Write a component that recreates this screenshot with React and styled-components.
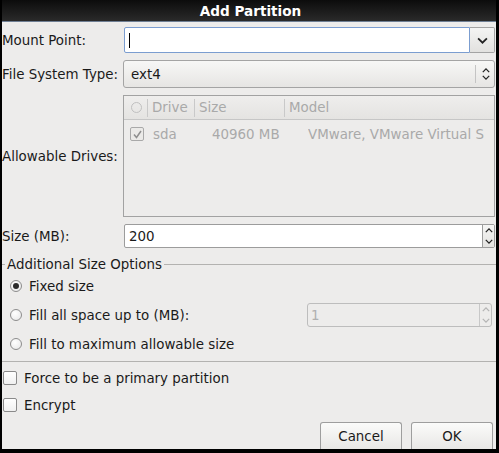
import React from "react";
import styled, { createGlobalStyle } from "styled-components";

const GlobalStyle = createGlobalStyle`
  html, body {
    margin: 0;
    padding: 0;
    background: #000;
  }
  body {
    font-family: "DejaVu Sans", "Liberation Sans", sans-serif;
    font-size: 13.4px;
    color: #1a1a1a;
  }
  * {
    box-sizing: border-box;
  }
`;

const Chevron = ({ dir = "down", size = 9, color = "#222" }) => (
  <svg width={size} height={Math.round(size * 0.6)} viewBox="0 0 10 6">
    <path
      d={dir === "down" ? "M1 1 L5 5 L9 1" : "M1 5 L5 1 L9 5"}
      fill="none"
      stroke={color}
      strokeWidth="1.6"
    />
  </svg>
);

const drives = [
  { drive: "sda", size: "40960 MB", model: "VMware, VMware Virtual S" },
];

function App() {
  return (
    <>
      <GlobalStyle />
      <Window>
        <TitleBar>Add Partition</TitleBar>
        <Body>
          <FormGrid>
            <Label>Mount Point:</Label>
            <ComboEntry>
              <Entry focused>
                <Caret />
              </Entry>
              <DropButton>
                <Chevron dir="down" size={11} />
              </DropButton>
            </ComboEntry>

            <Label>File System Type:</Label>
            <ComboBox>
              <span>ext4</span>
              <ComboArrows>
                <Chevron dir="up" size={8} />
                <Chevron dir="down" size={8} />
              </ComboArrows>
            </ComboBox>

            <Label>Allowable Drives:</Label>
            <DriveTable>
              <HeaderRow>
                <HeadCell width={24}>
                  <RadioMark size={11} dim />
                </HeadCell>
                <HeadCell width={47}>Drive</HeadCell>
                <HeadCell width={90}>Size</HeadCell>
                <HeadCell last>Model</HeadCell>
              </HeaderRow>
              {drives.map((d) => (
                <DriveRow key={d.drive}>
                  <Cell width={29}>
                    <CheckBox checked dim />
                  </Cell>
                  <Cell width={59}>{d.drive}</Cell>
                  <Cell width={96}>{d.size}</Cell>
                  <Cell>{d.model}</Cell>
                </DriveRow>
              ))}
            </DriveTable>

            <Label>Size (MB):</Label>
            <Spin>
              <SpinEntry>200</SpinEntry>
              <SpinButtons>
                <Chevron dir="up" size={8} />
                <Chevron dir="down" size={8} />
              </SpinButtons>
            </Spin>
          </FormGrid>

          <FrameHead>
            <FrameLine short />
            <FrameTitle>Additional Size Options</FrameTitle>
            <FrameLine />
          </FrameHead>

          <Options>
            <OptionRow>
              <RadioMark checked />
              <span>Fixed size</span>
            </OptionRow>
            <OptionRow>
              <RadioMark />
              <span>Fill all space up to (MB):</span>
              <DisabledSpin>
                <SpinEntry disabled>1</SpinEntry>
                <SpinButtons disabled>
                  <Chevron dir="up" size={8} color="#b4b4b4" />
                  <Chevron dir="down" size={8} color="#b4b4b4" />
                </SpinButtons>
              </DisabledSpin>
            </OptionRow>
            <OptionRow>
              <RadioMark />
              <span>Fill to maximum allowable size</span>
            </OptionRow>
          </Options>

          <Separator />

          <Checks>
            <CheckRow>
              <CheckBox />
              <span>Force to be a primary partition</span>
            </CheckRow>
            <CheckRow>
              <CheckBox />
              <span>Encrypt</span>
            </CheckRow>
          </Checks>

          <ButtonBar>
            <Button>Cancel</Button>
            <Button>OK</Button>
          </ButtonBar>
        </Body>
      </Window>
    </>
  );
}

export default App;

const Window = styled.div`
  width: 499px;
  height: 453px;
  display: flex;
  flex-direction: column;
  background: #edeceb;
  border-left: 2px solid #000;
  border-right: 3px solid #000;
  border-bottom: 4px solid #000;
  overflow: hidden;
`;

const TitleBar = styled.div`
  height: 22px;
  flex-shrink: 0;
  display: flex;
  align-items: center;
  justify-content: center;
  margin: 0 -3px 0 -2px;
  background: linear-gradient(#0c0c0c, #2a2a2a);
  border-bottom: 1px solid #6f7f94;
  color: #fff;
  font-weight: bold;
  font-size: 13.6px;
  padding-left: 2px;
`;

const Body = styled.div`
  flex: 1;
  display: flex;
  flex-direction: column;
`;

const FormGrid = styled.div`
  display: grid;
  grid-template-columns: 121px 1fr;
  grid-template-rows: 26px 28px 122px 24px;
  row-gap: 7px;
  margin-top: 5px;
  padding-right: 1px;
`;

const Label = styled.div`
  display: flex;
  align-items: center;
  color: #1a1a1a;
  white-space: nowrap;
`;

const ComboEntry = styled.div`
  display: flex;
  margin-left: 1px;
`;

const Entry = styled.div`
  flex: 1;
  display: flex;
  align-items: center;
  padding-left: 4px;
  background: #fff;
  border: 1px solid ${(p) => (p.focused ? "#7b9dd0" : "#9a9a9a")};
  border-radius: 2px 0 0 2px;
`;

const Caret = styled.div`
  width: 1px;
  height: 15px;
  background: #000;
`;

const DropButton = styled.div`
  width: 25px;
  display: flex;
  align-items: center;
  justify-content: center;
  background: linear-gradient(#f4f4f3, #e2e1df);
  border: 1px solid #a3a3a3;
  border-left: none;
  border-radius: 0 2px 2px 0;
`;

const ComboBox = styled.div`
  display: flex;
  align-items: center;
  justify-content: space-between;
  padding-left: 7px;
  background: linear-gradient(#f7f7f6, #e6e5e3);
  border: 1px solid #a4a4a4;
  border-radius: 3px;
`;

const ComboArrows = styled.div`
  height: 18px;
  width: 19px;
  display: flex;
  flex-direction: column;
  align-items: center;
  justify-content: center;
  gap: 2px;
  border-left: 1px solid #c4c4c4;
  padding-left: 1px;
`;

const DriveTable = styled.div`
  display: flex;
  flex-direction: column;
  border: 1px solid #a2a2a2;
  background: #edeceb;
  color: #a9a9a9;
`;

const HeaderRow = styled.div`
  height: 24px;
  display: flex;
  align-items: center;
  background: linear-gradient(#efeeed, #e4e3e1);
  border-bottom: 1px solid #c6c6c6;
`;

const HeadCell = styled.div`
  display: flex;
  align-items: center;
  height: 18px;
  padding-left: 4px;
  flex: ${(p) => (p.width ? `0 0 ${p.width}px` : "1")};
  border-right: ${(p) => (p.last ? "none" : "1px solid #c9c9c9")};
  &:first-child {
    padding-left: 7px;
  }
`;

const DriveRow = styled.div`
  height: 28px;
  display: flex;
  align-items: center;
`;

const Cell = styled.div`
  flex: ${(p) => (p.width ? `0 0 ${p.width}px` : "1")};
  white-space: nowrap;
  overflow: hidden;
  display: flex;
  align-items: center;
  &:first-child {
    padding-left: 6px;
  }
`;

const Spin = styled.div`
  display: flex;
  margin-left: 1px;
  background: #fff;
  border: 1px solid #9c9c9c;
  border-radius: 2px;
`;

const SpinEntry = styled.div`
  flex: 1;
  display: flex;
  align-items: center;
  padding-left: ${(p) => (p.disabled ? "3px" : "4px")};
  color: ${(p) => (p.disabled ? "#b0b0b0" : "#1a1a1a")};
`;

const SpinButtons = styled.div`
  width: 12px;
  display: flex;
  flex-direction: column;
  align-items: center;
  justify-content: space-around;
  border-left: 1px solid ${(p) => (p.disabled ? "#c8c8c8" : "#9c9c9c")};
  background: ${(p) => (p.disabled ? "transparent" : "linear-gradient(#f5f5f4, #e4e3e1)")};
`;

const DisabledSpin = styled(Spin)`
  margin-left: auto;
  width: 185px;
  height: 24px;
  margin-right: 4px;
  background: #edeceb;
  border-color: #bdbdbd;
  border-radius: 3px;
`;

const FrameHead = styled.div`
  display: flex;
  align-items: center;
  margin-top: 9px;
  height: 15px;
`;

const FrameLine = styled.div`
  height: 1px;
  background: #b3b2b0;
  flex: ${(p) => (p.short ? "0 0 3px" : "1")};
`;

const FrameTitle = styled.div`
  padding: 0 2px;
  white-space: nowrap;
`;

const Options = styled.div`
  display: flex;
  flex-direction: column;
  gap: 5px;
  margin-top: 2px;
  padding-left: 8px;
`;

const OptionRow = styled.div`
  height: 24px;
  display: flex;
  align-items: center;
  gap: 7px;
  white-space: nowrap;
`;

const RadioMark = styled.span`
  flex-shrink: 0;
  width: ${(p) => p.size || 12}px;
  height: ${(p) => p.size || 12}px;
  border-radius: 50%;
  border: 1px solid ${(p) => (p.dim ? "#c0c0c0" : "#8d8d8d")};
  background: ${(p) => (p.dim ? "transparent" : "radial-gradient(circle at 40% 35%, #ffffff, #e6e6e6)")};
  position: relative;
  display: inline-block;
  &::after {
    content: "";
    display: ${(p) => (p.checked ? "block" : "none")};
    position: absolute;
    left: 50%;
    top: 50%;
    width: 6px;
    height: 6px;
    margin: -3px 0 0 -3px;
    border-radius: 50%;
    background: #2b2b2b;
  }
`;

const Separator = styled.div`
  height: 1px;
  margin-top: 5px;
  background: #b3b2b0;
`;

const Checks = styled.div`
  display: flex;
  flex-direction: column;
  gap: 5px;
  margin-top: 5px;
  padding-left: 1px;
`;

const CheckRow = styled.div`
  height: 22px;
  display: flex;
  align-items: center;
  gap: 7px;
  white-space: nowrap;
`;

const CheckBox = ({ checked, dim }) => (
  <CheckSquare dim={dim}>
    {checked && (
      <svg width="11" height="11" viewBox="0 0 11 11">
        <path
          d="M2 5.5 L4.5 8.5 L9 2"
          fill="none"
          stroke={dim ? "#8f8f8f" : "#222"}
          strokeWidth="1.5"
        />
      </svg>
    )}
  </CheckSquare>
);

const CheckSquare = styled.span`
  flex-shrink: 0;
  width: 14px;
  height: 14px;
  display: inline-flex;
  align-items: center;
  justify-content: center;
  border: 1px solid ${(p) => (p.dim ? "#a9a9a9" : "#8a8a8a")};
  border-radius: 2px;
  background: ${(p) => (p.dim ? "#ebeae8" : "linear-gradient(#ffffff, #f0f0f0)")};
`;

const ButtonBar = styled.div`
  margin-top: auto;
  display: flex;
  justify-content: flex-end;
  gap: 9px;
  padding-right: 3px;
`;

const Button = styled.div`
  width: 82px;
  height: 27px;
  display: flex;
  align-items: center;
  justify-content: center;
  background: linear-gradient(#fbfbfa, #e8e7e5);
  border: 1px solid #9e9e9e;
  border-bottom: none;
  border-radius: 3px 3px 0 0;
  color: #1a1a1a;
`;
